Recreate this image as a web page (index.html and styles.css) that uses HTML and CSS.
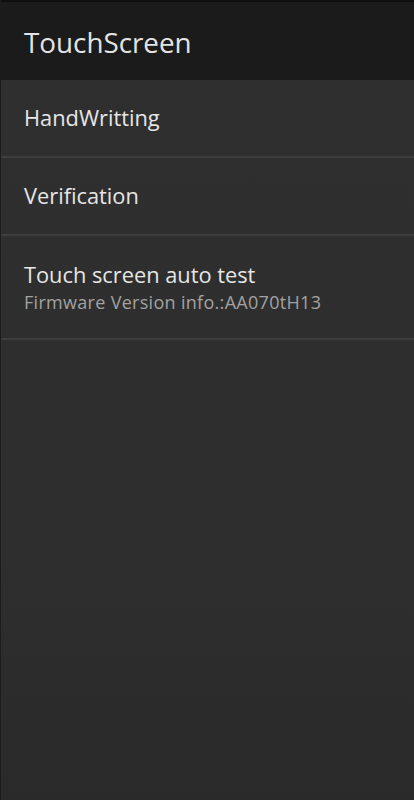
FILE: index.html
```html
<!DOCTYPE html>
<html>
<head>
<meta charset="utf-8">
<link rel="stylesheet" href="styles.css">
</head>
<body>
<div class="app">
  <header class="bar"><h1 class="title">TouchScreen</h1></header>
  <ul class="list">
    <li class="item"><span class="label">HandWritting</span></li>
    <li class="item"><span class="label">Verification</span></li>
    <li class="item item-two"><span class="label">Touch screen auto test</span><span class="sub">Firmware Version info.:AA070tH13</span></li>
  </ul>
</div>
</body>
</html>
```

FILE: styles.css
```css
html, body { margin: 0; padding: 0; }
body {
  width: 414px;
  height: 800px;
  overflow: hidden;
  font-family: "Open Sans", "Liberation Sans", sans-serif;
  background: #2e2e2e;
}
.app {
  height: 800px;
  display: flex;
  flex-direction: column;
  border-left: 1px solid #1c1c1c;
  background: linear-gradient(#2f2f2f, #2e2e2e 70%, #2a2a2a);
}
.bar {
  height: 78px;
  border-top: 2px solid #0f0f0f;
  background: #1b1b1b;
  display: flex;
  align-items: center;
  padding-left: 23px;
}
.title {
  margin: 0;
  font-size: 27.8px;
  font-weight: 400;
  color: #e4e4e4;
  line-height: 36px;
  padding-top: 2px;
}
.list { list-style: none; margin: 0; padding: 0; }
.item {
  height: 76px;
  border-bottom: 2px solid #3d3d3d;
  display: flex;
  flex-direction: column;
  justify-content: center;
  padding-left: 23px;
}
.item-two { box-sizing: border-box; height: 104px; padding-top: 2px; }
.label { font-size: 21.8px; color: #e6e6e6; line-height: 28px; }
.sub { font-size: 18px; letter-spacing: 0.3px; color: #a2a2a2; line-height: 26px; }
```
